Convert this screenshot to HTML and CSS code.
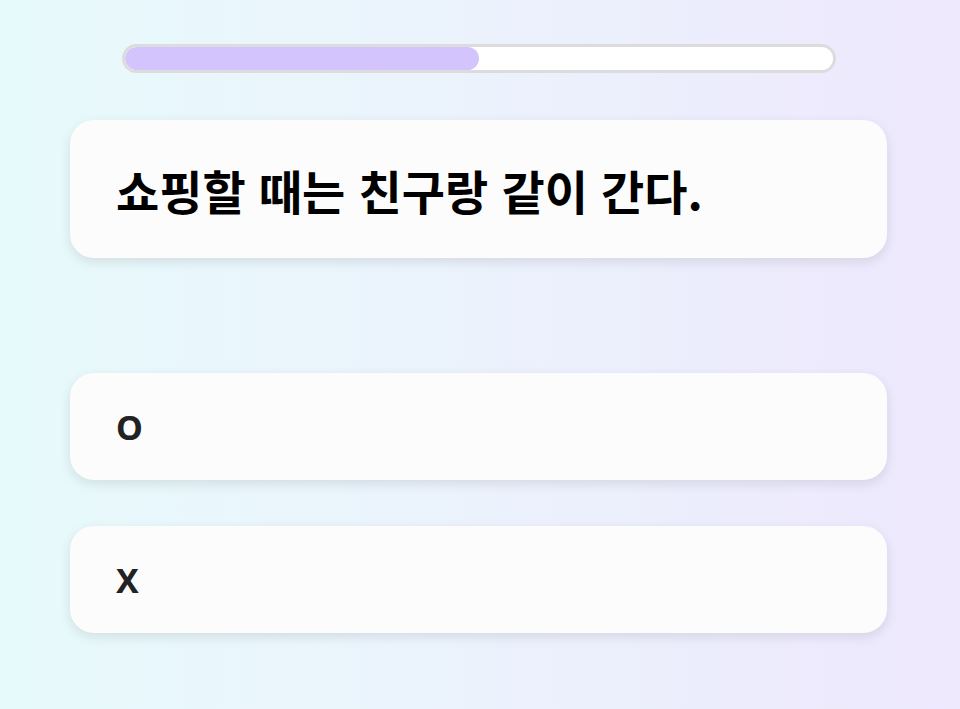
FILE: index.html
```html
<!DOCTYPE html>
<html lang="ko">
<head>
    <meta charset="UTF-8">
    <meta name="viewport" content="width=device-width, initial-scale=1.0">
    <title>퀴즈</title>
    <link rel="stylesheet" href="styles.css">
</head>
<body>
    <div class="quiz">
        <div class="progress">
            <div class="progress-fill" style="width: 50%"></div>
        </div>
        <div class="question">
            <h2>쇼핑할 때는 친구랑 같이 간다.</h2>
        </div>
        <div class="answers">
            <button class="answer">O</button>
            <button class="answer">X</button>
        </div>
    </div>
</body>
</html>
```

FILE: styles.css
```css
body {
    margin: 0;
    height: 100vh;
    font-family: "Noto Sans CJK KR", "Noto Sans", sans-serif;
    background: linear-gradient(90deg, #e7fafb 0%, #ebf3fc 45%, #eee8fd 100%);
}
.quiz {
    width: 817px;
    margin-left: 70px;
    padding-top: 44px;
    display: flex;
    flex-direction: column;
    align-items: center;
}
.progress {
    width: 708px;
    height: 23px;
    border: 3px solid #dcdcdc;
    border-radius: 20px;
    background: #fff;
    overflow: hidden;
}
.progress-fill {
    height: 100%;
    background: #d3c4fd;
    border-radius: 20px;
}
.question {
    width: 100%;
    box-sizing: border-box;
    height: 138px;
    margin-top: 47px;
    padding: 0 46px;
    display: flex;
    align-items: center;
    background: #fcfcfc;
    border-radius: 24px;
    box-shadow: 0 4px 12px rgba(0, 0, 0, 0.1);
}
.question h2 {
    margin: 0;
    font-size: 47px;
    font-weight: 700;
    color: #000;
}
.answers {
    width: 100%;
    margin-top: 115px;
    display: flex;
    flex-direction: column;
    gap: 46px;
}
.answer {
    height: 107px;
    padding: 0 46px;
    text-align: left;
    border: none;
    background: #fcfcfc;
    border-radius: 24px;
    box-shadow: 0 4px 12px rgba(0, 0, 0, 0.1);
    font-family: "Noto Sans", sans-serif;
    font-size: 34px;
    font-weight: 700;
    color: #222;
    cursor: pointer;
}
```
